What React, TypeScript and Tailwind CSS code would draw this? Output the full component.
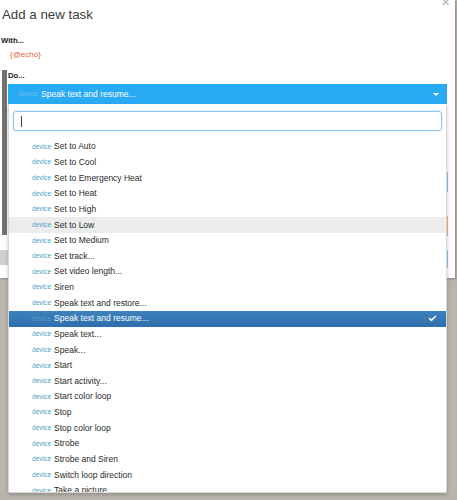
import { Check } from "lucide-react";

const items = [
  "Set to Auto",
  "Set to Cool",
  "Set to Emergency Heat",
  "Set to Heat",
  "Set to High",
  "Set to Low",
  "Set to Medium",
  "Set track...",
  "Set video length...",
  "Siren",
  "Speak text and restore...",
  "Speak text and resume...",
  "Speak text...",
  "Speak...",
  "Start",
  "Start activity...",
  "Start color loop",
  "Stop",
  "Stop color loop",
  "Strobe",
  "Strobe and Siren",
  "Switch loop direction",
  "Take a picture",
];

const hovered = "Set to Low";
const selected = "Speak text and resume...";

export default function App() {
  return (
    <div
      className="relative h-[500px] w-[457px] overflow-hidden bg-[#b9b5ad] text-[#333]"
      style={{ fontFamily: '"Liberation Sans", Arial, sans-serif' }}
    >
      {/* Modal */}
      <div className="relative h-[278px] w-[455px] bg-white shadow-[1px_1px_2px_rgba(0,0,0,0.25)]">
        <span className="absolute right-[5px] top-[-6px] text-[15px] leading-[15px] text-[#b0b0b0]">×</span>
        <div className="pl-[2px] pt-[7px] text-[13.3px] leading-[16px] text-[#3c3c3c]">Add a new task</div>
        <div className="mt-[13px] pl-[1px] text-[7.7px] font-bold leading-[10px] text-[#222]">With...</div>
        <div className="mt-[4px] pl-[10px] text-[8px] leading-[10px] text-[#e0643c]">{"{@echo}"}</div>

        {/* Do section, mostly under the dropdown */}
        <div className="ml-[2px] mt-[10px] h-[165px] border-l-[5px] border-[#727272] pl-[1px]">
          <div className="pt-[1px] text-[7.7px] font-bold leading-[10px] text-[#222]">Do...</div>
          <div className="mt-[91px] h-[20px] w-[440px] border-r-2 border-[#8cc8ea]" />
          <div className="mt-[24px] h-[20px] w-[440px] border-r-2 border-[#e4b48e]" />
        </div>
        <div className="mt-[15px] flex">
          <div className="h-[15px] w-[8px] bg-[#cfcfcf]" />
          <div className="ml-[438px] h-[18px] border-r-2 border-[#8cc8ea]" />
        </div>
      </div>

      {/* Dropdown */}
      <div className="absolute left-[8px] top-[84px] w-[439px]">
        <div className="flex h-[20px] items-center bg-[#29abf4] pl-[10px] pr-[8px]">
          <span className="text-[6.6px] text-[#6cbde9]">device</span>
          <span className="ml-[4px] text-[8.5px] text-white">Speak text and resume...</span>
          <span className="ml-auto h-0 w-0 border-x-[3px] border-t-[3px] border-x-transparent border-t-white" />
        </div>
        <div className="h-[389px] overflow-hidden rounded-b-[2px] border border-t-0 border-[#d6d6d6] bg-white shadow-[0_2px_4px_rgba(0,0,0,0.2)]">
          <div className="px-[4px] pt-[7px]">
            <div className="flex h-[20px] items-center rounded-[3px] border border-[#8cc4ea] pl-[7px] shadow-[0_0_2px_rgba(102,175,233,0.5)]">
              <span className="h-[11px] w-px bg-[#444]" />
            </div>
          </div>
          <div className="pt-[8px]">
            {items.map((item) => {
              const isSel = item === selected;
              const isHov = item === hovered;
              return (
                <div
                  key={item}
                  className={
                    "flex h-[15.64px] items-center pl-[23px] pr-[9px] " +
                    (isSel
                      ? "bg-gradient-to-b from-[#3c81bd] to-[#2f6fab] text-white"
                      : isHov
                        ? "bg-[#ececec]"
                        : "")
                  }
                >
                  <span className={"text-[6.6px] " + (isSel ? "text-[#5c9ac9]" : "text-[#4aa3c2]")}>device</span>
                  <span className={"ml-[3px] text-[8.5px] " + (isSel ? "text-white" : "text-[#2a2a2a]")}>{item}</span>
                  {isSel && <Check className="ml-auto h-[9px] w-[9px] text-white" strokeWidth={4} />}
                </div>
              );
            })}
          </div>
        </div>
      </div>
    </div>
  );
}
